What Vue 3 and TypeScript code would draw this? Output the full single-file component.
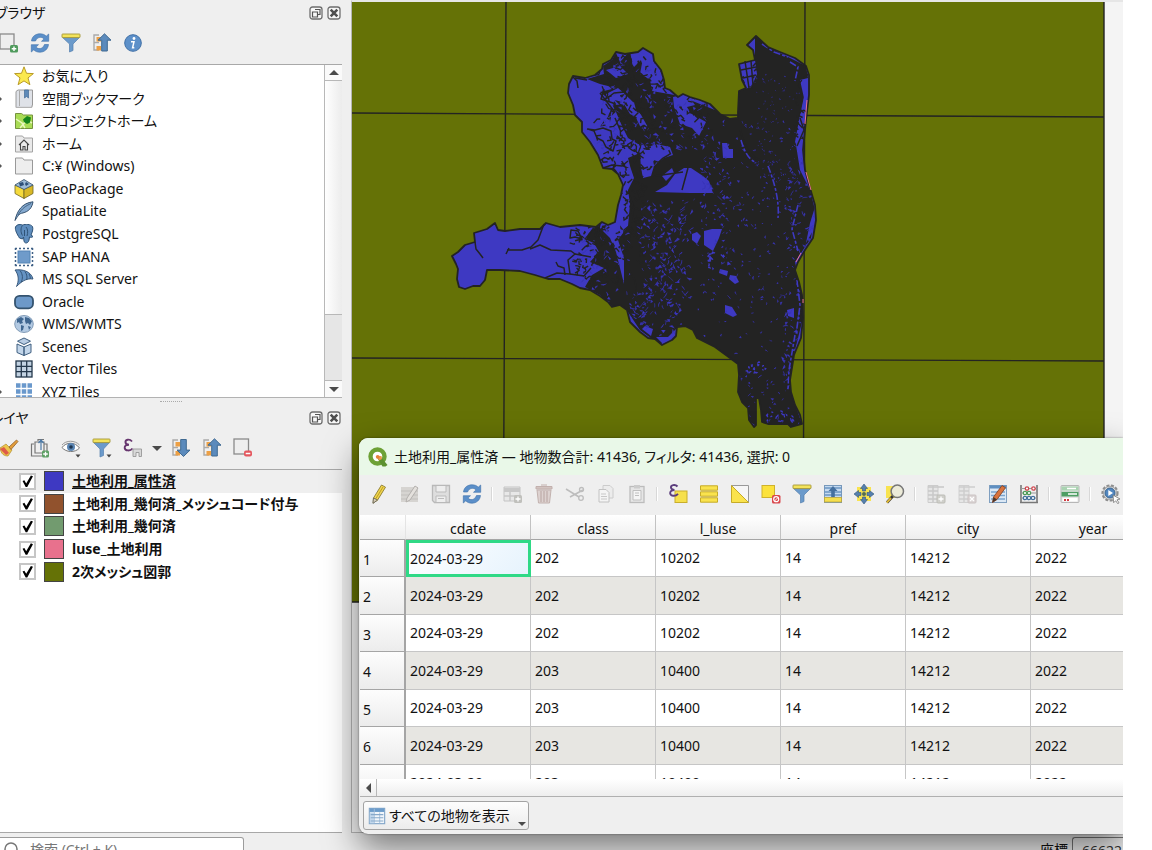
<script setup lang="ts">
import { ref } from 'vue'

interface TreeItem { label: string; icon: string; branch?: boolean }
interface Layer { name: string; color: string; on: boolean; active?: boolean }
interface Tool { icon: string; label: string; off?: boolean }

const icons: Record<string, string> = {
  addLayer: '<rect x="1" y="1" width="14" height="15" fill="#eee" stroke="#8a8a8a" stroke-width="1.3"/><rect x="11" y="12" width="8" height="7.500" rx="1.500" fill="#4f9a5c"/><path d="M15 13.500v4.500M12.700 15.700h4.600" stroke="#fff" stroke-width="1.400"/>',
  refresh: '<path d="M1.500 8C2 3 6 .8 10 .8c3 0 5 1 6.200 2.400L18.700 1v7.300h-7.200l2.500-2.400C12 3.600 7.500 3.500 5.500 8z" fill="#5b8fc9" stroke="#3d6fa8" stroke-width=".6"/><path d="M18.500 11.500c-.5 5-4.500 7.700-8.500 7.700-3 0-5-1-6.200-2.400L1.300 19v-7.300h7.200L6 14.100c2 2.300 6.500 2.400 8.500-2.600z" fill="#5b8fc9" stroke="#3d6fa8" stroke-width=".6"/>',
  filter: '<path d="M1.500 4.500h17L12 11v6.500L8.500 19v-8z" fill="#6b9acb" stroke="#5580ad" stroke-width=".7"/><rect x="1" y="1" width="18" height="3.600" rx=".6" fill="#f3e35b" stroke="#a59635" stroke-width=".9"/>',
  filterMenu: '<path d="M1.500 4.500h16L11.500 11v6.500L8 19v-8z" fill="#6b9acb" stroke="#5580ad" stroke-width=".7"/><rect x="1" y="1" width="17" height="3.600" rx=".6" fill="#f3e35b" stroke="#a59635" stroke-width=".9"/><path d="M14.500 16.500h5l-2.500 3z" fill="#444"/>',
  collapse: '<path d="M7 2H2v15h5M2 9.500h5" fill="none" stroke="#aaa" stroke-width="1.400"/><rect x="4.500" y="4" width="4.500" height="4.500" fill="#eda045"/><rect x="4.500" y="13" width="4.500" height="4.500" fill="#eda045"/><path d="M12.500 .8l6.500 6.400h-3.700V18h-5.600V7.200H6z" fill="#5b8abc" stroke="#3f6991" stroke-width="1"/>',
  expand: '<path d="M7 2H2v15h5M2 9.500h5" fill="none" stroke="#aaa" stroke-width="1.400"/><rect x="4.500" y="4" width="4.500" height="4.500" fill="#eda045"/><rect x="4.500" y="13" width="4.500" height="4.500" fill="#eda045"/><path d="M12.500 18.500l6.500-6.400h-3.700V1.500h-5.600v10.600H6z" fill="#5b8abc" stroke="#3f6991" stroke-width="1"/>',
  info: '<circle cx="10" cy="10" r="8.300" fill="#5d90c9" stroke="#3f6fa6" stroke-width="1"/><circle cx="11" cy="5.500" r="1.400" fill="#fff"/><path d="M8 8.700h3l-1.400 6h1.700" fill="none" stroke="#fff" stroke-width="1.500"/>',
  star: '<path d="M10 .8l2.500 6.500 6.900.3-5.400 4.300 1.900 6.800L10 14.900l-5.900 3.800L6 11.900.6 7.600l6.900-.3z" fill="#fbe94e" stroke="#b99b27" stroke-width="1"/>',
  bookmark: '<path d="M2 2.500L4 1h14.500v15l-1 2.500H2z" fill="#dfe2e8" stroke="#9a9a9a"/><path d="M5.500 1.500V17" stroke="#aaa"/><path d="M2 18.300h16v-2" fill="none" stroke="#bbb"/><path d="M10.500 1h4v8l-2-1.500-2 1.500z" fill="#5f8ab8" stroke="#446b96" stroke-width=".7"/>',
  project: '<path d="M1.500 2.500h6l2 1.500h9v13.500h-17z" fill="#a9dc55" stroke="#76923f"/><path d="M2 8l6 4 3 5M6 17l7-8 5 3" stroke="#e9f7bd" stroke-width="1.500" fill="none"/><path d="M9 8.500L13 5l4 1.500-1 5-3 1.500-3-2z" fill="#17851c"/>',
  home: '<path d="M1.500 2h7l1.500 2h8.500v14h-17z" fill="#eaeaea" stroke="#a4a4a4"/><path d="M5 11l5-5 5 5M6.500 10v6h2.500v-3.500h2V16h2.500v-6" fill="none" stroke="#444" stroke-width="1.100"/>',
  folder: '<path d="M1.500 2h7l1.500 2h8.500v14h-17z" fill="#eee" stroke="#999"/>',
  geopackage: '<path d="M1 6l9 4v9.500L1 14.500z" fill="#f5da3c" stroke="#6f6422" stroke-width=".8"/><path d="M19 6l-9 4v9.500l9-5z" fill="#d9b826" stroke="#6f6422" stroke-width=".8"/><path d="M1 6l9-5.500L19 6l-9 4.500z" fill="#9dbbd8" stroke="#35506c" stroke-width=".8"/><path d="M5 4l4-1 1 3-4 1.500zM12 3l3 2-3 2-1-2z" fill="#2c4f78"/>',
  feather: '<path d="M1 19.500C3 10 8 2 19 .8c-1 6-4 10-11.500 11.500-2 .3-4 3-6.500 7.200z" fill="#84a9cf" stroke="#34516f" stroke-width="1"/><path d="M4 14C8 7 12 5 17 2.500" fill="none" stroke="#34516f" stroke-width=".8"/>',
  elephant: '<path d="M1.500 3C3-.2 7 .5 8.500 1c3-1 8-1 10 1.500 1 3-.5 6-1.500 8.500l2 1.500c-1 1-2.500 1-3.500.5l-.5 3c-.5 3.500-4.500 4-5 1L9.500 13l-1 2-3-1C3 10 .8 6 1.500 3z" fill="#5f8dbd" stroke="#2f5377" stroke-width="1"/><path d="M8.500 1.500c-2 2-2 7 0 10M12 3c2 2 2 6 1 9M10.500 6v6" fill="none" stroke="#2f5377" stroke-width="1"/>',
  hana: '<rect x="4" y="4" width="12" height="12" fill="#6f9bca" stroke="#5584b5"/><path d="M1 1.500h18M1 18.500h18M1.500 1v18M18.500 1v18" stroke="#3e5f85" stroke-width="1.500" stroke-dasharray="2 2"/>',
  mssql: '<path d="M1 1c7-1 16 1 18 9-7-1-12 3-16.500 7.500C5 12 5 6 1 1z" fill="#6593c3" stroke="#2f4f72" stroke-width=".9"/><path d="M6 1.500c3 4 3 8 1 12M11 2.500c2 3 2.500 6 1.500 8.500M15 5c1 2 1.500 3.500 1.200 5" stroke="#2f4f72" stroke-width=".9" fill="none"/>',
  oracle: '<rect x="1" y="3.800" width="18" height="12.500" rx="4.500" fill="#6d99c9" stroke="#34536f" stroke-width="1.800"/>',
  globe: '<ellipse cx="10" cy="10" rx="9.300" ry="8.500" fill="#b3cae3" stroke="#7893b0" stroke-width=".9"/><path d="M3 5l4-2 3 2-2 2 1 2-3 1-1-2-2 1zM11 3l4 1 3 3-2 4-2-2-2 1-1-3zM7 11l3 1-1 4-2 1zM14 12l3 1-2 3z" fill="#3f6690"/>',
  cube: '<path d="M10 1l6.500 3.200L10 7.500 3.500 4.200z" fill="#b9cde4" stroke="#3f5f80"/><path d="M3 7l7 3v8.500l-7-3zM17 7l-7 3v8.500l7-3z" fill="#c3d6ea" stroke="#3f5f80"/>',
  vtiles: '<rect x="2" y="2" width="16" height="16" fill="#c3d3e3" stroke="#24384c" stroke-width="1.300"/><path d="M7.300 2v16M12.700 2v16M2 7.300h16M2 12.700h16" stroke="#24384c" stroke-width="1.300"/>',
  xyz: '<path d="M2 3.500h16M2 9.500h16M2 15.500h16" stroke="#6998cc" stroke-width="4.500" stroke-dasharray="4.500 1.250"/>',
  brush: '<path d="M1 10l6-4 6 6-4 6c-4 0-7-2-8-8z" fill="#edc64d" stroke="#b28c2e" stroke-width=".7"/><path d="M1 11l4-2 5 6-3 2z" fill="#dd5a49"/><path d="M10 9l7.500-7 1.500 1.500-7 8z" fill="#e39e3c" stroke="#91602b" stroke-width=".8"/>',
  group: '<path d="M4 6H1.500v12H12M5 4h9v11H5zM8 3V1.500h6M14 6h3v7" fill="none" stroke="#777" stroke-width="1.200"/><path d="M11 12V2.500M8.500 5L11 2l2.500 3" fill="none" stroke="#4d7ba9" stroke-width="1.200"/><rect x="12" y="12.500" width="7" height="7" rx="1.500" fill="#5ea065"/><path d="M15.500 13.700v4.600M13.200 16h4.600" stroke="#fff" stroke-width="1.300"/>',
  eye: '<path d="M1 9.500C5 4 14 3.500 18.500 10 14 15 5 14.500 1 9.500z" fill="#fff" stroke="#777" stroke-width="1"/><circle cx="10" cy="9" r="4" fill="#5b86b4"/><circle cx="10" cy="9" r="1.800" fill="#1d3550"/><path d="M1 7C5 2 14 2 18.500 7" fill="none" stroke="#999"/><path d="M14.500 16.500h5l-2.500 3z" fill="#444"/>',
  epsFilter: '<path d="M9 3.500C6.500.5 2 1.500 2.500 4.500 2.700 6 4 6.700 6 6.700 3 6.700 1.500 8 1.700 10c.4 3 5.500 3.300 7.800.5" fill="none" stroke="#67366f" stroke-width="1.900"/><path d="M10 11h8.500v7.500h-2.500v-4h-3v4H10z" fill="#d8d8d8" stroke="#999" stroke-width=".9"/>',
  removeLayer: '<rect x="1" y="1" width="14.500" height="15" fill="#eee" stroke="#8a8a8a" stroke-width="1.300"/><rect x="11" y="12.500" width="8" height="6" rx="2" fill="#e4575e"/><path d="M12.700 15.500h4.600" stroke="#fff" stroke-width="1.500"/>',
  pencil: '<path d="M4.500 14L12.500 1l4 2.200-8 13-4.500 3z" fill="#f1d54b" stroke="#8a7a32" stroke-width=".9"/><path d="M14 3l-7.700 12.500" stroke="#b99c29" stroke-width="1"/><path d="M4.500 14l4 2-4.500 3.300z" fill="#d9cdb4" stroke="#555" stroke-width=".7"/>',
  multiEdit: '<path d="M1 3h17v15H1z" fill="#d6d4d1"/><path d="M1 7h17M1 11h17M1 15h17" stroke="#c2c0bd"/><path d="M7 14L15 2l3 2-8 12-4 2z" fill="#e4e1dd" stroke="#b3b0ad"/>',
  save: '<path d="M1.500 1.500h17v17h-15l-2-2z" fill="#dedede" stroke="#b9b9b9" stroke-width="1.300"/><path d="M5 2v6h10V2M5 18v-6h10v6M7 14.500h6" fill="#eee" stroke="#bbb"/>',
  addFeature: '<path d="M1 3h16v14H1z" fill="#e8e8e8" stroke="#c4c4c4"/><path d="M1 4h16v4H1z" fill="#c8c8c8"/><path d="M1 12h16M7 8v9" stroke="#c6c6c6" stroke-width="1.500"/><rect x="11" y="11" width="8" height="8" rx="1.500" fill="#c0c0bc"/><path d="M15 12.500v5M12.500 15h5" stroke="#fff" stroke-width="1.300"/>',
  trash: '<path d="M3 6h14l-1.500 13h-11z" fill="#ddd2d0" stroke="#c2b2af"/><path d="M7 7v11M10 7v11M13 7v11" stroke="#c0aeab" stroke-width="1.300"/><path d="M2 2.500h16V5H2zM7 1h6" fill="#d2c3c0" stroke="#c2b0ad"/>',
  cut: '<path d="M1 5l13 8M18 6L5 13" stroke="#bdbdbd" stroke-width="1.500"/><circle cx="16" cy="14" r="2.300" fill="none" stroke="#bdbdbd" stroke-width="1.300"/><circle cx="16.500" cy="5.500" r="2" fill="none" stroke="#bdbdbd" stroke-width="1.300"/>',
  copy: '<path d="M7 1.500h7l3 3V14H7z" fill="#ececec" stroke="#ccc"/><path d="M3 5.500h7l3 3V18H3z" fill="#f4f4f4" stroke="#c2c2c2"/><path d="M5 10h5M5 12.500h6M5 15h6" stroke="#c8c8c8"/>',
  paste: '<rect x="3" y="2.500" width="14" height="16" fill="#e6e6e6" stroke="#bcbcbc" stroke-width="1.300"/><path d="M7 1h6v3.500H7z" fill="#ccc"/><path d="M6 6.500h8V16H6z" fill="#f5f5f5" stroke="#bfbfbf"/><path d="M8 9h4M8 11.500h4" stroke="#bfbfbf"/>',
  epsSelect: '<rect x="7" y="7" width="12" height="11.500" fill="#f6e04c" stroke="#c9ae2b"/><path d="M9.500 2.500C7-.2 2.500 1 3 3.700 3.200 5.200 4.500 6 6.500 6 3.500 6 2 7.300 2.200 9.300c.4 3 5.500 3.300 7.800.5" fill="none" stroke="#5c3e7d" stroke-width="1.900"/>',
  selectAll: '<path d="M1.500 1.800h17v4.400h-17zM1.500 7.800h17v4.400h-17zM1.500 13.800h17v4.400h-17z" fill="#fae34d" stroke="#c6ab27" stroke-width="1"/>',
  invert: '<path d="M1.500 1.500h17v17z" fill="#f6f6f6" stroke="#999"/><path d="M1.500 1.500v17h17z" fill="#fae34d" stroke="#c6ab27"/>',
  deselect: '<rect x="1" y="1.500" width="12.500" height="12" fill="#fce23c" stroke="#cfb22c"/><rect x="11" y="11" width="8.500" height="8.500" rx="1.500" fill="#d9474c"/><circle cx="15.200" cy="15.200" r="2.500" fill="none" stroke="#fff" stroke-width="1.200"/><path d="M13.500 17l3.500-3.500" stroke="#fff"/>',
  moveTop: '<rect x="1.500" y="1.500" width="17" height="17" fill="#c5daf0" stroke="#7899bb"/><path d="M1.500 4h17M1.500 8h17M1.500 11h17" stroke="#6c96c2" stroke-width="1.500"/><rect x="1.500" y="13.500" width="17" height="4.500" fill="#f5df4e" stroke="#bba53a" stroke-width=".8"/><path d="M10 2l4.500 5h-2.700v6H8.200V7H5.500z" fill="#45709f"/>',
  panTo: '<rect x="3" y="3" width="14" height="14" fill="#f8e350"/><path d="M10 0l3.500 4.500h-2V7h-3V4.500h-2zM10 20l3.500-4.500h-2V13h-3v2.500h-2zM0 10l4.500-3.500v2H7v3H4.500v2zM20 10l-4.500-3.500v2H13v3h2.500v2z" fill="#557fad" stroke="#31567e" stroke-width=".6"/><circle cx="10" cy="10" r="2" fill="#526d52"/>',
  zoomTo: '<rect x="1" y="2" width="11" height="12" fill="#f8e350"/><circle cx="12.300" cy="7.300" r="6.200" fill="#ecebd9" stroke="#777" stroke-width="1.500"/><path d="M7.700 12.300L2 18.500" stroke="#333" stroke-width="2.800"/><path d="M6 14l-4.200 4.700" stroke="#e0ba38" stroke-width="2"/>',
  newField: '<path d="M2 1.500h10v17H2z" fill="#e6e6e6" stroke="#ccc"/><path d="M2 3h16M2 7h10M2 11h10M2 15h10M7 2v16" stroke="#c8c8c8" stroke-width="1.500"/><rect x="11" y="11" width="8" height="8" rx="1" fill="#cfcfca" stroke="#bdbdb7"/><path d="M15 12.500v5M12.500 15h5" stroke="#fff" stroke-width="1.300"/>',
  delField: '<path d="M2 1.500h10v17H2z" fill="#e6e6e6" stroke="#d0d0d0"/><path d="M2 3h16M2 7h10M2 11h10M2 15h10M7 2v16" stroke="#cecece" stroke-width="1.500"/><rect x="11" y="11" width="8" height="8" rx="1" fill="#dad4d4" stroke="#cac2c2"/><path d="M13 13l4 4M17 13l-4 4" stroke="#fff" stroke-width="1.200"/>',
  organize: '<rect x="1.500" y="1.500" width="17" height="17" fill="#dbe8f5" stroke="#7f9fc0"/><path d="M2 3h16" stroke="#5f8fc1" stroke-width="3"/><path d="M3 8h14M3 11.500h14M3 15h14" stroke="#7ba4ce" stroke-width="1.500"/><path d="M5.500 13L14 1.500l3.500 2.200L9 15.500l-4.500 3z" fill="#d9733d" stroke="#7d3e20" stroke-width=".8"/><path d="M5.500 13l3.500 2.500-4.500 3z" fill="#4b382c"/>',
  abacus: '<path d="M2 1v18M18 1v18M1 18.500h18" stroke="#777" stroke-width="1.600"/><path d="M2 4.500h16M2 9h16M2 14h16" stroke="#999"/><g fill="#fff" stroke-width="1.300"><g stroke="#cf4850"><circle cx="8" cy="4.500" r="1.700"/><circle cx="14.500" cy="4.500" r="1.700"/></g><g stroke="#4f9b59"><circle cx="6" cy="9" r="1.700"/><circle cx="10" cy="9" r="1.700"/></g><g stroke="#45719d"><circle cx="6" cy="14" r="1.700"/><circle cx="10" cy="14" r="1.700"/><circle cx="14" cy="14" r="1.700"/></g></g>',
  conditional: '<rect x="1" y="1.500" width="18" height="17" rx="1" fill="#e4e4e4" stroke="#a9a9a9" stroke-width=".8"/><path d="M1.500 2.500h17v4h-17z" fill="#a9d3b1"/><path d="M1.500 7.800h17v4.700h-17z" fill="#4f9e64"/><path d="M7 4.500h9M8 10h9" stroke="#fff" stroke-width="1.500"/><path d="M2.500 14h15v3.500h-15z" fill="#fff"/><path d="M4 16h6" stroke="#d13b42" stroke-width="1.800" stroke-dasharray="2 1"/>',
  gear: '<circle cx="9" cy="9" r="7.500" fill="#ddd" stroke="#8f8f8f" stroke-width="2.200" stroke-dasharray="3 1.500"/><circle cx="9" cy="9" r="6.500" fill="#e6e6e6" stroke="#999" stroke-width=".8"/><circle cx="9" cy="9" r="5" fill="#5287c0" stroke="#3b658f"/><path d="M7.300 6l4.700 3-4.700 3z" fill="#fff"/><path d="M12 11l7 4-3 .8 2 3-1.300.9-2-3-2 2z" fill="#fff" stroke="#777" stroke-width=".8"/>',
  table: '<rect x="1.500" y="1.500" width="17" height="17" fill="#f1f6fb" stroke="#86a8ca" stroke-width="1.300"/><path d="M2 3.500h16" stroke="#6c9ccb" stroke-width="4"/><path d="M2 6h4.500v12H2z" fill="#c3d8ed"/><path d="M7 2v16M13 6v12" stroke="#a5c0db"/><path d="M3 8.500h14M3 12h14M3 15.500h14" stroke="#87a9ca" stroke-width="1.200"/>',
  qgis: '<circle cx="9.500" cy="9.500" r="7" fill="#fff" stroke="#6da136" stroke-width="4.400"/><path d="M9 10.500l3.500-1 7 8.500-2 1.500h-3z" fill="#5c9130"/><path d="M9 9l4.500 0 .5 3-3 1.500z" fill="#ee9a4e"/><circle cx="9.700" cy="9.800" r="1.900" fill="#e8813a"/>',
  float: '<rect x="1" y="1" width="12" height="12" rx="2.500" fill="#f7f7f7" stroke="#6e6e6e" stroke-width="1.300"/><path d="M6 3.500h5v5H9M3.500 6h5v5h-5z" fill="none" stroke="#555" stroke-width="1.200"/>',
  close: '<rect x="1" y="1" width="12" height="12" rx="2.500" fill="#f7f7f7" stroke="#6e6e6e" stroke-width="1.300"/><path d="M3.700 3.700l6.600 6.600M10.300 3.700l-6.600 6.600" stroke="#4e4e4e" stroke-width="2.600"/>',
  search: '<circle cx="9" cy="9" r="6" fill="none" stroke="#777" stroke-width="1.500"/><path d="M13.500 13.500L18 18" stroke="#777" stroke-width="1.500"/>',
}

const browserTools: Tool[] = [
  { icon: 'addLayer', label: '選択レイヤを追加' }, { icon: 'refresh', label: '再読み込み' },
  { icon: 'filter', label: 'ブラウザをフィルタ' }, { icon: 'collapse', label: 'すべて折りたたむ' },
  { icon: 'info', label: 'プロパティ' },
]
const layerTools: Tool[] = [
  { icon: 'brush', label: 'レイヤスタイル' }, { icon: 'group', label: 'グループを追加' },
  { icon: 'eye', label: '地図テーマ' }, { icon: 'filterMenu', label: '凡例をフィルタ' },
  { icon: 'epsFilter', label: '式でフィルタ' }, { icon: '', label: 'フィルタのメニュー' },
  { icon: 'expand', label: 'すべて展開' }, { icon: 'collapse', label: 'すべて折りたたむ' },
  { icon: 'removeLayer', label: 'レイヤを削除' },
]
const tree: TreeItem[] = [
  { label: 'お気に入り', icon: 'star' },
  { label: '空間ブックマーク', icon: 'bookmark', branch: true },
  { label: 'プロジェクトホーム', icon: 'project', branch: true },
  { label: 'ホーム', icon: 'home', branch: true },
  { label: 'C:¥ (Windows)', icon: 'folder', branch: true },
  { label: 'GeoPackage', icon: 'geopackage' },
  { label: 'SpatiaLite', icon: 'feather' },
  { label: 'PostgreSQL', icon: 'elephant' },
  { label: 'SAP HANA', icon: 'hana' },
  { label: 'MS SQL Server', icon: 'mssql' },
  { label: 'Oracle', icon: 'oracle' },
  { label: 'WMS/WMTS', icon: 'globe' },
  { label: 'Scenes', icon: 'cube' },
  { label: 'Vector Tiles', icon: 'vtiles' },
  { label: 'XYZ Tiles', icon: 'xyz', branch: true },
]
const layers = ref<Layer[]>([
  { name: '土地利用_属性済', color: '#3e39c2', on: true, active: true },
  { name: '土地利用_幾何済_メッシュコード付与', color: '#91522d', on: true },
  { name: '土地利用_幾何済', color: '#729b6f', on: true },
  { name: 'luse_土地利用', color: '#e8718d', on: true },
  { name: '2次メッシュ図郭', color: '#657206', on: true },
])

const tableTools: Tool[][] = [
  [
    { icon: 'pencil', label: '編集モード' }, { icon: 'multiEdit', label: '一括編集', off: true },
    { icon: 'save', label: '編集を保存', off: true }, { icon: 'refresh', label: '再読み込み' },
  ],
  [
    { icon: 'addFeature', label: '地物を追加', off: true }, { icon: 'trash', label: '削除', off: true },
    { icon: 'cut', label: '切り取り', off: true }, { icon: 'copy', label: 'コピー', off: true },
    { icon: 'paste', label: '貼り付け', off: true },
  ],
  [
    { icon: 'epsSelect', label: '式で選択' }, { icon: 'selectAll', label: 'すべて選択' },
    { icon: 'invert', label: '選択を反転' }, { icon: 'deselect', label: '選択解除' },
    { icon: 'filter', label: 'フィルタ' }, { icon: 'moveTop', label: '選択を先頭へ' },
    { icon: 'panTo', label: '選択行へ移動' }, { icon: 'zoomTo', label: '選択行へズーム' },
  ],
  [
    { icon: 'newField', label: '新規フィールド', off: true }, { icon: 'delField', label: 'フィールドを削除', off: true },
    { icon: 'organize', label: '列の構成' }, { icon: 'abacus', label: 'フィールド計算機' },
  ],
  [{ icon: 'conditional', label: '条件付き書式' }],
  [{ icon: 'gear', label: 'アクション' }],
]

const columns = ['cdate', 'class', 'l_luse', 'pref', 'city', 'year']
const rows = [
  ['202', '10202'], ['202', '10202'], ['202', '10202'],
  ['203', '10400'], ['203', '10400'], ['203', '10400'], ['203', '10400'],
].map(([cls, luse]) => ['2024-03-29', cls, luse, '14', '14212', '2022'])

// City boundary, in canvas coordinates
const outline = 'M452 256L456 264 458 269 457 279 459 287 465 289 473 286 480 286 485 280 487 270 500 270 520 271 535 275 548 279 560 279 572 284 580 288 590 290 600 296 608 302 612 307 620 305 627 310 630 322 640 332 648 338 655 339 662 345 672 340 676 336 677 327 685 326 693 330 697 338 715 347 730 358 738 364 739 375 738 392 742 402 748 408 749 420 754 427 756 425 756 398 759 398 761 410 762 422 768 424 788 424 791 427 802 424 800 415 795 405 791 392 790 380 794 355 801 338 803 318 802 295 799 282 795 270 798 262 805 250 813 238 816 220 815 205 810 188 805 170 803 150 806 120 809 95 809 75 806 66 795 58 780 52 768 47 756 36 747 45 753 50 755 60 739 64 742 80 746 88 739 91 738 112 738 118 730 119 720 114 710 104 700 100 690 97 683 94 678 97 670 90 665 88 664 80 661 70 654 61 653 54 643 48 638 52 625 54 616 52 611 60 603 64 602 69 595 75 585 78 573 76 569 84 568 93 573 105 575 115 582 122 582 132 590 142 598 155 603 168 612 169 618 174 623 185 621 195 618 205 615 222 608 225 602 222 596 227 580 225 560 227 546 223 540 229 520 229 505 231 498 230 495 223 487 229 474 233 475 242 465 245 458 252Z'
const dense = 'M587 79L604 74 603 66 612 60 616 53 620 62 630 51 633 68 643 58 640 74 650 80 652 91 680 96 720 112 738 118 738 91 748 88 755 75 755 36 768 47 806 66 808 78 800 80 804 98 800 120 796 145 800 170 810 190 815 210 811 238 795 262 798 275 803 300 803 318 795 350 790 385 795 405 803 426 760 426 759 398 756 398 756 426 748 420 738 392 738 364 697 338 685 326 677 328 660 345 640 330 628 312 618 306 612 306 600 295 585 287 592 275 604 268 590 262 599 252 594 243 584 239 592 230 598 226 610 238 616 252 624 284 624 258 618 240 628 226 630 204 628 190 634 178 630 166 628 158 642 152 648 146 638 144 628 138 622 126 616 112 610 100 600 92 616 88 600 84z'
const patches = [
  'M655 192L667 185 675 174 684 168 691 168 703 176 709 181 713 193 690 193z',
  'M704 231L712 229 722 229 719 238 713 251 704 245z',
  'M740 64L755 60 757 74 751 88 744 88z',
  'M805 92L807 108 803 138 804 155 800 152 795 142 799 120z',
  'M640 154l6-6 10-4 14 3 3 8-9 3-10 8-3 10-8 2-2-10z',
  'M603 148l12-8 8 6 4 10-6 8-12 4z',
  'M720 269L728 271 727 276 719 273z', 'M730 275l6 1 3 6-4 2-6-5z',
  'M725 305l7 2 5 8-4 2-8-4z', 'M787 310l7-2 0 10-6-2z',
  'M722 143h5l2 6h4v9h-10z', 'M645 326l8 3-2 7-9-7z',
  'M673 97l14-3 8 11-8 2 3 6 16 9-7 14-7-8-12-4-6-17z',
  'M656 337h16l-9 7z', 'M815 207l0 20-9 16 4-20z',
  'M606 70l14-4 8 8-12 4z', 'M638 52l9 2 5 10-9 2z', 'M650 66l11 4 4 16-10-3z', 'M632 110l8 3 10 18-9-3z',
  'M606 94l12-6 16 14 4 16-8-4-6-10-16 2z', 'M692 234l5-2 4 4-4 8-5-4z', 'M662 176l10-8 2 5-8 8z',
]
const roads = [
  'M573 77l4 4 1 7M587 80l-12-2', 'M587 129l8 1 8-2 8 3 1 8 4 2-3 10-7-4-3-6-6-3-3-7-6-2',
  'M603 168l9-3 10 1 6-5', 'M475 242l1 7 4 5 3 4', 'M506 254l3-6M507 250h15l9-3 7-7 6-16', 'M530 249l10-4 11 5 20 1 4 3-7 6 2 14-13-1-12 5',
  'M556 262l2 4 6 2 1 7', 'M575 254l16 3M570 274l14 2 7-8M600 224l-2 9 9 10M571 230l7 1 4 8-7-2-5 1z',
  'M604 89l-3 10 12 4 16 18 4 9M606 99l8-6 10-1 10 10M615 118l6 14', 'M600 93l14 18', 'M624 240v-10l10-8-2-12M626 218l8-8-4-14M629 270l6 10 2 16',
  'M640 190l15-14 28-4M682 190l6-22M745 61l4 27M741 70l15-3M743 78l13-3M751 61l2 24', 'M740 128q6 28 20 32', 'M800 118l4 12-7 16',
]

// Deterministic noise for the parcel texture
let seed = 20240329
const rnd = () => {
  seed = (seed * 1103515245 + 12345) % 2147483648
  return seed / 2147483648
}
const scatter = (x: number, y: number, w: number, h: number, n: number, s: number) => {
  let d = ''
  for (let i = 0; i < n; i++) {
    const px = x + rnd() * w
    const py = y + rnd() * h
    const a = () => ((rnd() - 0.5) * 2 * s).toFixed(1)
    d += `M${px.toFixed(1)} ${py.toFixed(1)}l${a()} ${a()} ${a()} ${a()}`
  }
  return d
}
const specks = [
  scatter(600, 60, 70, 90, 80, 3), scatter(650, 90, 60, 60, 55, 3), scatter(640, 200, 50, 105, 200, 3),
  scatter(630, 290, 50, 45, 70, 3), scatter(580, 225, 50, 80, 55, 3), scatter(700, 120, 95, 180, 150, 2),
  scatter(755, 75, 45, 110, 110, 1), scatter(690, 190, 110, 200, 110, 2), scatter(740, 360, 62, 65, 50, 2),
  scatter(790, 160, 25, 90, 60, 3), scatter(782, 270, 20, 120, 60, 3), scatter(700, 140, 30, 90, 40, 3),
].join('')
const lots = scatter(745, 362, 22, 12, 14, 2) + scatter(765, 410, 30, 13, 16, 2) + scatter(708, 254, 22, 14, 12, 3)
const shore = 'M741 140q5 18 14 22M768 166q12 30 10 52M798 205l-6 24 6 22M797 280l3 25-4 30M795 335l-6 35-1 20M792 390l10 32M762 44l12 8 14 5M790 62l8 5-3 14'
const veins = [
  scatter(600, 58, 68, 90, 120, 5), scatter(675, 92, 35, 45, 30, 4), scatter(606, 140, 66, 32, 45, 5),
  scatter(575, 225, 45, 60, 80, 4), scatter(622, 175, 24, 90, 70, 4), scatter(738, 62, 18, 26, 8, 3),
  scatter(795, 70, 15, 90, 18, 4),
].join('')
</script>

<template>
  <div class="app">
    <div class="workspace">
      <aside class="side">
        <section class="panel browser">
          <header class="panel-head">
            <h2>ブラウザ</h2>
            <button class="mini" aria-label="フロート"><svg viewBox="0 0 14 14" v-html="icons.float" /></button>
            <button class="mini" aria-label="閉じる"><svg viewBox="0 0 14 14" v-html="icons.close" /></button>
          </header>
          <div class="tools">
            <button v-for="t in browserTools" :key="t.icon" class="tool" :aria-label="t.label">
              <svg class="ic" viewBox="0 0 20 20" v-html="icons[t.icon]" />
            </button>
          </div>
          <div class="tree-box">
            <ul class="tree">
              <li v-for="t in tree" :key="t.label">
                <span class="twist" :class="{ branch: t.branch }" />
                <svg class="ic" viewBox="0 0 20 20" v-html="icons[t.icon]" />
                <span>{{ t.label }}</span>
              </li>
            </ul>
            <div class="vbar">
              <button aria-label="上へ"><i class="up" /></button>
              <div class="track" />
              <div class="thumb" />
              <button aria-label="下へ"><i class="down" /></button>
            </div>
          </div>
        </section>
        <div class="split"><span /></div>
        <section class="panel layers">
          <header class="panel-head">
            <h2 class="cut">レイヤ</h2>
            <button class="mini" aria-label="フロート"><svg viewBox="0 0 14 14" v-html="icons.float" /></button>
            <button class="mini" aria-label="閉じる"><svg viewBox="0 0 14 14" v-html="icons.close" /></button>
          </header>
          <div class="tools">
            <button v-for="t in layerTools" :key="t.label" class="tool" :class="{ drop: !t.icon }" :aria-label="t.label">
              <svg v-if="t.icon" class="ic" viewBox="0 0 20 20" v-html="icons[t.icon]" />
              <i v-else class="down" />
            </button>
          </div>
          <div class="layer-box">
            <ul class="layer-list">
              <li v-for="(l, i) in layers" :key="l.name" :class="{ active: l.active }">
                <input :id="'layer' + i" v-model="l.on" type="checkbox">
                <span class="swatch" :style="{ background: l.color }" />
                <label :for="'layer' + i">{{ l.name }}</label>
              </li>
            </ul>
          </div>
        </section>
      </aside>

      <main class="canvas">
        <svg class="map" role="img" aria-label="地図">
          <defs><clipPath id="city"><path :d="outline" /></clipPath></defs>
          <g transform="translate(-352 -2)">
            <rect x="352" y="2" width="752" height="600" fill="#657206" />
            <path d="M506 2L503 602M805 2L803 602M352 113L1104 117M352 358L1104 361M1104 2V602M352 602H1104" fill="none" stroke="#232323" stroke-width="1.400" />
            <path :d="outline" fill="#3e39c2" />
            <g clip-path="url(#city)">
              <path :d="dense" fill="#232323" />
              <path v-for="p in patches" :key="p" :d="p" fill="#3e39c2" />
              <path :d="veins" fill="none" stroke="#232323" stroke-width="1.400" />
              <path :d="specks" fill="#3e39c2" stroke="#3832b0" stroke-width=".6" />
              <path :d="lots" fill="#3e39c2" stroke="#3e39c2" stroke-width="1.200" />
              <path :d="shore" fill="none" stroke="#3e39c2" stroke-width="1.600" stroke-dasharray="7 2 3 2" />
            </g>
            <g fill="none" stroke="#232323" stroke-width="1.500" stroke-linejoin="round">
              <path v-for="r in roads" :key="r" :d="r" />
              <path :d="outline" stroke-width="1.800" />
            </g>
            <path d="M807 100l-2 24M806 172l5 18M796 262l5-9M803 299v4" fill="none" stroke="#e8718d" stroke-width="1" />
          </g>
        </svg>
      </main>
    </div>

    <footer class="status">
      <label class="find"><svg class="ic" viewBox="0 0 20 20" v-html="icons.search" /><input type="text" placeholder="検索 (Ctrl + K)" aria-label="検索"></label>
      <label class="coord">座標 <input type="text" value="66622"></label>
    </footer>

    <section class="dialog">
      <header class="dialog-head">
        <svg class="ic" viewBox="0 0 20 20" v-html="icons.qgis" />
        <h1>土地利用_属性済 — 地物数合計: 41436, フィルタ: 41436, 選択: 0</h1>
      </header>
      <div class="dialog-tools">
        <div v-for="(g, i) in tableTools" :key="i" class="tool-group">
          <button v-for="t in g" :key="t.icon" class="tool" :aria-label="t.label" :disabled="t.off">
            <svg class="ic" viewBox="0 0 20 20" v-html="icons[t.icon]" />
          </button>
        </div>
      </div>
      <div class="grid-box">
        <table>
          <colgroup><col class="num"><col v-for="c in columns" :key="c" class="data"></colgroup>
          <thead>
            <tr><td class="corner" /><th v-for="c in columns" :key="c" scope="col">{{ c }}</th></tr>
          </thead>
          <tbody>
            <tr v-for="(r, i) in rows" :key="i">
              <th scope="row">{{ i + 1 }}</th>
              <td v-for="(v, j) in r" :key="j" :class="{ current: i === 0 && j === 0 }">{{ v }}</td>
            </tr>
          </tbody>
        </table>
      </div>
      <div class="hbar"><button aria-label="左へ"><i class="left" /></button></div>
      <footer class="dialog-foot">
        <button class="show-all"><svg class="ic" viewBox="0 0 20 20" v-html="icons.table" /><span>すべての地物を表示</span><i class="down" /></button>
      </footer>
    </section>
  </div>
</template>

<style>
body { margin: 0; background: #fff; }
</style>

<style scoped>
* { box-sizing: border-box; }
.app {
  position: relative;
  display: flex;
  flex-direction: column;
  height: 100vh;
  margin-right: 29px;
  overflow: hidden;
  background: #efefef;
  color: #111;
  font: 14px/20px "Noto Sans", "Noto Sans CJK JP", sans-serif;
  font-feature-settings: "palt";
}
button { margin: 0; padding: 0; border: 0; background: none; font: inherit; color: inherit; }
ul { list-style: none; margin: 0; padding: 0; }
h1, h2 { margin: 0; font-size: 14px; font-weight: 400; white-space: nowrap; }
.ic { display: block; flex: none; width: 20px; height: 20px; }
.up, .down, .left { display: block; border: 5px solid transparent; }
.up { border-top: 0; border-bottom-color: #4a4a4a; }
.down { border-bottom: 0; border-top-color: #4a4a4a; }
.left { border-left: 0; border-right-color: #4a4a4a; }

.workspace { flex: 1; display: flex; min-height: 0; }
.side { flex: none; width: 351px; display: flex; flex-direction: column; padding-right: 9px; }
.panel { display: flex; flex-direction: column; }
.browser { flex: none; }
.layers { flex: 1; min-height: 0; }
.panel-head { display: flex; align-items: center; gap: 4px; height: 26px; padding-right: 1px; }
.panel-head h2 { flex: 1; margin-left: -5px; }
.panel-head h2.cut { margin-left: -9px; }
.mini { width: 14px; height: 14px; }
.mini svg { display: block; width: 14px; height: 14px; }
.tools { display: flex; align-items: center; height: 38px; margin-left: -7px; padding-bottom: 4px; }
.tool { flex: none; display: flex; align-items: center; justify-content: center; width: 31px; height: 31px; }
.tool.drop { width: 17px; }
.tree-box { display: flex; height: 334px; border-top: 1px solid #a8a8a8; border-bottom: 1px solid #b2b2b2; background: #fff; overflow: hidden; }
.tree { flex: 1; display: flex; flex-direction: column; height: 338px; }
.tree li { flex: 1; display: flex; align-items: center; white-space: nowrap; }
.tree .ic { margin-right: 8px; }
.twist { width: 14px; }
.twist.branch::before { content: ""; display: block; width: 0; margin-left: -2px; border: 4px solid transparent; border-right: 0; border-left-color: #555; }
.vbar { display: flex; flex-direction: column; width: 18px; border-left: 1px solid #b8b8b8; background: linear-gradient(90deg, #fff, #ececec); }
.vbar button { display: flex; align-items: center; justify-content: center; height: 16px; background: #fafafa; }
.vbar button:first-child { border-bottom: 1px solid #b8b8b8; }
.track { flex: 1; }
.thumb { height: 67px; border: 1px solid #b8b8b8; border-width: 1px 0; background: #e6e6e6; }
.split { display: flex; justify-content: center; align-items: center; height: 7px; }
.split span { width: 22px; border-top: 1px dotted #aaa; }
.layer-box { flex: 1; border-top: 1px solid #a8a8a8; border-bottom: 1px solid #a8a8a8; background: #fff; }
.layer-list { display: flex; flex-direction: column; height: 113px; }
.layer-list li { flex: 1; display: flex; align-items: center; gap: 8px; padding-left: 19px; white-space: nowrap; font-weight: 700; }
.layer-list li.active { background: #efefef; }
.active label { text-decoration: underline; text-underline-offset: 2px; }
.layer-list input { appearance: none; flex: none; width: 17px; height: 17px; margin: 0; border: 2px solid #c6c6c6; background: #fff; }
.layer-list input:checked::after { content: ""; display: block; width: 13px; height: 13px; background: #000; clip-path: polygon(12% 48%, 26% 42%, 40% 66%, 76% 6%, 92% 12%, 48% 94%, 36% 94%); }
.swatch { width: 20px; height: 20px; border: 1px solid #444; }

.canvas { flex: 1; min-width: 0; border: 1px solid #b5b5b5; border-top: 2px solid #e6e6e6; border-right: 0; background: #f4f4f4; }
.map { display: block; width: 100%; height: 100%; }

.status { flex: none; display: flex; justify-content: space-between; height: 17px; padding-top: 4px; }
.status label { display: flex; height: 26px; white-space: nowrap; }
.status input { min-width: 0; border: 0; background: none; font: inherit; color: #333; outline: 0; }
.find { align-items: center; gap: 8px; width: 244px; padding-left: 2px; border: 1px solid #9c9c9c; border-left: 0; border-radius: 0 3px 3px 0; background: #fff; }
.find input { flex: 1; padding: 0; }
.find input::placeholder { color: #777; }
.coord { align-items: center; gap: 4px; }
.coord input { width: 51px; height: 26px; padding: 0 0 0 9px; border: 1px solid #777; border-right: 0; border-radius: 3px 0 0 3px; }

.dialog { position: absolute; top: 438px; left: 359px; right: 0; border-radius: 9px 0 0 9px; background: #efefef; box-shadow: 0 14px 34px rgba(0, 0, 0, .5), 0 0 2px rgba(0, 0, 0, .5); }
.dialog-head { display: flex; align-items: center; gap: 6px; height: 37px; padding-left: 9px; border-radius: 9px 0 0 0; background: #e9f8e8; overflow: hidden; }
.dialog-tools { display: flex; align-items: center; height: 40px; padding: 0 0 2px 4px; overflow: hidden; }
.tool-group { display: flex; align-items: center; }
.tool-group + .tool-group::before { content: ""; width: 1px; height: 14px; margin: 0 4px; background: #fff; border-left: 1px solid #d8d8d8; }
.grid-box { height: 264px; margin-left: 1px; overflow: hidden; background: #fff; }
table { width: 796px; table-layout: fixed; border-collapse: separate; border-spacing: 0; }
col.num { width: 46px; }
col.data { width: 125px; }
thead tr { height: 25px; }
thead th, .corner { padding: 3px 0 0; border-right: 1px solid #c2c2c2; border-bottom: 1px solid #a5a5a5; background: linear-gradient(#fff, #eee); font-weight: 400; line-height: 20px; }
.corner { border-right-color: #e4e4e4; }
tbody tr { height: 37px; }
tbody tr:nth-child(even) { height: 38px; }
tbody th { padding: 3px 0 0 3px; border-right: 2px solid #a5a5a5; border-bottom: 1px solid #a5a5a5; background: linear-gradient(#fdfdfd, #ececec); font-weight: 400; text-align: left; }
tbody td { padding: 0 0 0 4px; border-right: 1px solid #c6c6c6; border-bottom: 1px solid #c6c6c6; }
tbody tr:nth-child(even) td { background: #e7e6e2; }
tbody td.current { padding-left: 1px; border: 3px solid #2fd986; background: linear-gradient(135deg, #fff, #e6f3fd); }
.hbar { height: 18px; margin-left: 1px; border-bottom: 1px solid #b0b0b0; background: linear-gradient(#fff, #eee); }
.hbar button { display: flex; align-items: center; justify-content: center; width: 17px; height: 17px; border-right: 1px solid #b8b8b8; }
.dialog-foot { height: 37px; padding: 4px; }
.show-all { display: flex; align-items: center; gap: 3px; width: 166px; height: 29px; padding: 0 2px 0 4px; border: 1px solid #a3a3a3; border-radius: 3px; background: linear-gradient(#fdfdfd, #ececec); white-space: nowrap; }
.show-all span { flex: 1; text-align: left; }
.show-all .ic { width: 18px; height: 18px; }
.show-all .down { align-self: flex-end; margin-bottom: 3px; border-width: 4px; border-bottom: 0; }
</style>
